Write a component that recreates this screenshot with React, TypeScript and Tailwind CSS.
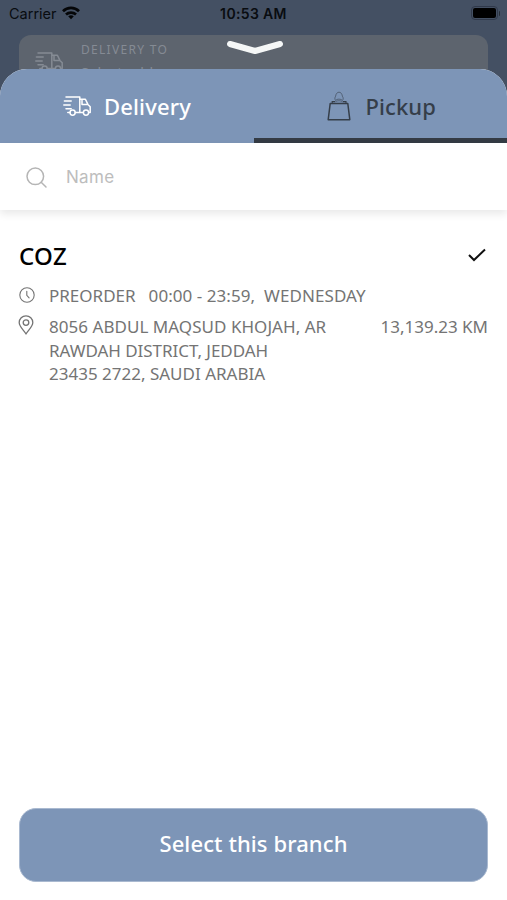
import type { ReactNode } from "react";

function TruckIcon({ className }: { className: string }) {
  return (
    <svg viewBox="0 0 28 20" fill="none" stroke="currentColor" strokeWidth="1.5" strokeLinecap="round" strokeLinejoin="round" className={className}>
      <path d="M3 1H16.8V16.4H12.3M1.4 4.9H8.2M.8 8.9H7.2M3 12.8H8.2M4.8 16.4H6.9" />
      <path d="M17 3.2H22.4L24.9 8.4L27.2 10.8V16.4H25.8M20.3 16.4H17M19 3.6V8.6H24.6" />
      <circle cx="9.6" cy="16.6" r="2.6" />
      <circle cx="23" cy="16.6" r="2.6" />
    </svg>
  );
}

function BagIcon() {
  return (
    <svg viewBox="0 0 24 30" fill="none" stroke="currentColor" className="h-[30px] w-6">
      <path d="M3.2 12.5H20.8L22.8 28.7H1.2Z" strokeWidth="1.5" strokeLinejoin="round" />
      <path d="M5.2 12.2V10.6H8M19 12.2V10.6H16" strokeWidth="1.1" />
      <path d="M8.5 9.4C7.4 7.8 7.9 6.4 8.6 5.2C8.9 2.8 10.2 1.2 12 1.2S15 2.8 15.4 5.2C16.4 6.7 16.5 8.2 15.5 9.4C13.6 7.7 10.3 7.7 8.5 9.4ZM8.3 10.8C10.3 9.4 13.7 9.4 15.7 10.8" strokeWidth=".9" opacity=".65" />
    </svg>
  );
}

function WifiIcon() {
  return (
    <svg viewBox="0 0 18 14" className="-mt-[2px] ml-[5px] h-[14px] w-[18px]" fill="none" stroke="#050608" strokeWidth="2.7">
      <path d="M1 5.2C5.5.8 12.5.8 17 5.2M4 8.5C6.8 5.9 11.2 5.9 14 8.5" />
      <path d="M6.2 10.3C7.9 8.9 10.1 8.9 11.8 10.3L9 13.2Z" fill="#050608" stroke="none" />
    </svg>
  );
}

function DetailRow({ icon, children }: { icon: ReactNode; children: ReactNode }) {
  return (
    <div className="flex text-[17px] leading-[23.3px] text-[#747474]">
      <div className="w-[30px] shrink-0">{icon}</div>
      {children}
    </div>
  );
}

export default function App() {
  return (
    <div className="flex h-[900px] w-[507px] flex-col overflow-hidden bg-[#445063] font-['Noto_Sans',sans-serif]">
      <header className="h-[100px] shrink-0">
        <div className="grid h-[35px] grid-cols-3 px-[9px] pt-[4px] font-['Inter',sans-serif] text-[14.5px] leading-[20px] text-[#090c10]">
          <div className="flex h-5 items-center">
            <span>Carrier</span>
            <WifiIcon />
          </div>
          <div className="text-center text-[14px] font-semibold tracking-[.35px]">10:53 AM</div>
          <div className="-mr-[2px] -mt-px flex h-5 items-center justify-end">
            <div className="h-[14px] w-[27px] rounded-[4px] border border-[#30394a] p-px">
              <div className="h-full rounded-[2px] bg-black" />
            </div>
            <div className="ml-px h-[5px] w-[1.5px] rounded-r bg-[#272e38]" />
          </div>
        </div>
        <div className="relative mx-[19px] h-[65px] rounded-t-[12px] bg-[#5d646e]">
          <div className="flex pl-[16px] pt-[7px] text-[#858b94]">
            <TruckIcon className="mt-[10px] h-5 w-7" />
            <div className="ml-[18px]">
              <p className="text-[12px] leading-[16px] tracking-[1.3px]">DELIVERY TO</p>
              <p className="mt-[5px] text-[14px] leading-[20px] tracking-[.5px]">Select address</p>
            </div>
          </div>
          <svg viewBox="0 0 58 15" className="absolute left-[207px] top-[5px] h-[15px] w-[58px]" fill="none" stroke="#f5f7f7" strokeWidth="6" strokeLinecap="round" strokeLinejoin="round">
            <path d="M4 4L29 11L54 4" />
          </svg>
        </div>
      </header>

      <main className="relative -mt-[31px] flex min-h-0 flex-1 flex-col overflow-hidden rounded-t-[27px] bg-white">
        <nav className="grid h-[74px] shrink-0 grid-cols-2 bg-[#7d95b7] text-[22px] font-medium leading-[30px]">
          <button className="flex h-[74px] items-center pl-[63px] text-white">
            <TruckIcon className="h-5 w-7" />
            <span className="-mt-px ml-[13px] tracking-[.15px]">Delivery</span>
          </button>
          <button className="flex h-[74px] items-center border-b-[5px] border-[#343b44] pl-[73px] pt-[4px] text-[#353e49]">
            <BagIcon />
            <span className="ml-[15px] tracking-[.1px]">Pickup</span>
          </button>
        </nav>

        <label className="flex h-[67px] shrink-0 items-center bg-white pl-[26px] pt-[2px] shadow-[0_4px_8px_rgba(0,0,0,0.09)]">
          <svg viewBox="0 0 22 22" className="h-[22px] w-[22px]" fill="none" stroke="#b5b5b5" strokeWidth="1.5" strokeLinecap="round">
            <circle cx="9.3" cy="9.3" r="8.3" />
            <path d="M15.2 15.2L20 20" />
          </svg>
          <span className="ml-[18px] font-['Inter',sans-serif] text-[17px] tracking-[.3px] text-[#bdbdbd]">Name</span>
        </label>

        <section className="px-[19px] pt-[30px]">
          <div className="flex h-[32px] items-center justify-between">
            <h1 className="text-[24px] font-medium leading-[32px] tracking-[.3px] text-black">COZ</h1>
            <svg viewBox="0 0 18 14" className="-mt-[2px] mr-[2px] h-[14px] w-[18px]" fill="none" stroke="#111" strokeWidth="2">
              <path d="M1 7L6 12L17 1.5" />
            </svg>
          </div>
          <div className="mt-[12px]">
            <DetailRow
              icon={
                <svg viewBox="0 0 16 16" className="mt-[3px] h-4 w-4" fill="none" stroke="currentColor" strokeWidth="1.1" strokeLinecap="round">
                  <circle cx="8" cy="8" r="7.2" />
                  <path d="M7.8 4.2V8.3L10.1 10.8" />
                </svg>
              }
            >
              <span>PREORDER</span>
              <span className="ml-[13px] tracking-[.05px]">00:00 - 23:59,</span>
              <span className="ml-[9px] tracking-[.08px]">WEDNESDAY</span>
            </DetailRow>
          </div>
          <div className="mt-[8px]">
            <DetailRow
              icon={
                <svg viewBox="0 0 16 20" className="-ml-px h-5 w-4" fill="none" stroke="currentColor" strokeWidth="1.3" strokeLinejoin="round">
                  <path d="M8 19C6.2 15.7 1.2 11.8 1.2 7.6A6.8 6.8 0 0 1 14.8 7.6C14.8 11.8 9.8 15.7 8 19Z" />
                  <circle cx="8" cy="7.6" r="2.8" />
                </svg>
              }
            >
              <address className="whitespace-nowrap not-italic">
                <span className="tracking-[.04px]">8056 ABDUL MAQSUD KHOJAH, AR</span>
                <br />
                <span className="tracking-[-.04px]">RAWDAH DISTRICT, JEDDAH</span>
                <br />
                23435 2722, SAUDI ARABIA
              </address>
              <span className="ml-auto whitespace-nowrap">13,139.23 KM</span>
            </DetailRow>
          </div>
        </section>

        <button className="mx-[19px] mb-[18px] mt-auto h-[74px] shrink-0 rounded-[17px] border border-[#a9b9d0] bg-[#7d95b7] pb-[3px] text-[22px] font-medium tracking-[.1px] text-white">
          Select this branch
        </button>
      </main>
    </div>
  );
}
